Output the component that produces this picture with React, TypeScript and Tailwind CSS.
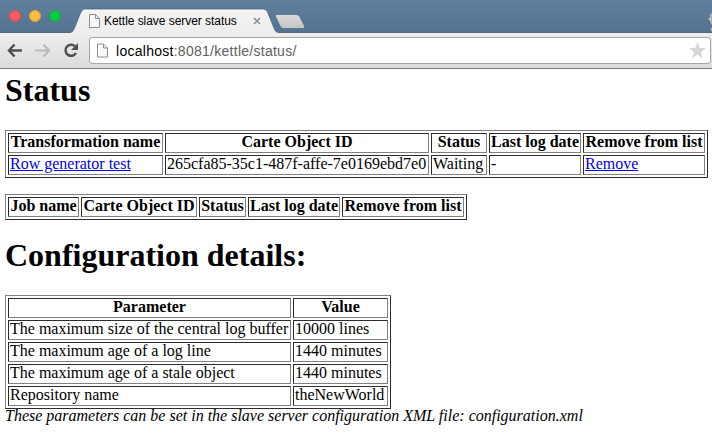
import type { ReactNode } from "react";

function PageIcon({ w, h }: { w: number; h: number }) {
  return (
    <svg width={w} height={h} viewBox="0 0 11 14" className="shrink-0">
      <path d="M.5.5h6l4 4v9H.5z" fill="#f8f8f8" stroke="#8e8e8e" />
      <path d="M6.5.5v4h4" fill="none" stroke="#8e8e8e" />
    </svg>
  );
}

function Th({ children }: { children: ReactNode }) {
  return (
    <th className="h-5 border border-t-[#2c2c2c] border-r-[#808080] border-b-[#808080] border-l-[#2c2c2c] p-0 text-center align-top leading-4 font-bold whitespace-nowrap">
      {children}
    </th>
  );
}

function Td({ children }: { children: ReactNode }) {
  return (
    <td className="h-5 border border-t-[#2c2c2c] border-r-[#808080] border-b-[#808080] border-l-[#2c2c2c] px-px py-0 text-left align-top leading-4 whitespace-nowrap">
      {children}
    </td>
  );
}

function Table({ width, cols, children }: { width: number; cols: number[]; children: ReactNode }) {
  return (
    <table
      className="table-fixed border-separate border-spacing-[2px] border border-t-[#808080] border-r-[#2c2c2c] border-b-[#2c2c2c] border-l-[#808080]"
      style={{ width }}
    >
      <colgroup>
        {cols.map((c, i) => (
          <col key={i} style={{ width: c }} />
        ))}
      </colgroup>
      <tbody>{children}</tbody>
    </table>
  );
}

function BrowserChrome() {
  return (
    <header className="h-[69px] font-['Liberation_Sans',Arial,sans-serif]">
      <div className="relative flex h-8 bg-linear-to-b from-[#617f9e] to-[#547391]">
        <div className="flex gap-2 pt-[10px] pl-[9px]">
          <span className="h-3 w-3 rounded-full border border-[#e0484a] bg-[#fc5b5e]" />
          <span className="h-3 w-3 rounded-full border border-[#dfa030] bg-[#fdbc40]" />
          <span className="h-3 w-3 rounded-full border border-[#10a93a] bg-[#08cc46]" />
        </div>
        <svg className="absolute top-0 left-0" width="712" height="33" viewBox="0 0 712 33">
          <defs>
            <linearGradient id="tab" x1="0" y1="0" x2="0" y2="1">
              <stop offset="0" stopColor="#f4f4f4" />
              <stop offset="1" stopColor="#ededed" />
            </linearGradient>
            <linearGradient id="newtab" x1="0" y1="0" x2="0" y2="1">
              <stop offset="0" stopColor="#dadada" />
              <stop offset="1" stopColor="#c4c4c4" />
            </linearGradient>
          </defs>
          <path d="M70 33C73 32 73.5 30 74.5 28L80.5 13Q82 9 85 9H263Q266 9 267.5 12L274 28C275 31 276 32 279 33Z" fill="url(#tab)" />
          <path
            d="M0 32.5H70C73 32 73.5 30 74.5 28L80.5 13Q82 9 85 9H263Q266 9 267.5 12L274 28C275 31 276 32.5 279 32.5H712"
            fill="none"
            stroke="#3f566d"
            strokeOpacity=".65"
          />
          <path d="M277 14.500H296Q299 14.500 300 17L304.500 26Q305.500 28.500 303 28.500H283.500Q281 28.500 280 26L275.500 16.500Q275 14.500 277 14.500Z" fill="url(#newtab)" stroke="#4b6680" strokeOpacity=".7" />
          <path d="M712 12.500L709.500 14l.5 3-2.500 2 2.500 2v3l2 1zM712 26l-2 3 1 3h1z" fill="#c9c9c9" stroke="#505a64" strokeWidth=".6" />
        </svg>
        <div className="absolute top-[14px] left-[89px] flex h-[14px] items-center">
          <PageIcon w={11} h={14} />
          <span className="ml-1 w-[149px] text-[12px] leading-[14px] tracking-[-0.05px] whitespace-nowrap text-black">Kettle slave server status</span>
          <svg width="8" height="8" viewBox="0 0 8 8" className="shrink-0">
            <path d="M1 1l6 6M7 1L1 7" stroke="#8b8b8b" strokeWidth="1.5" />
          </svg>
        </div>
      </div>
      <div className="flex h-[37px] border-t border-b border-t-[#8b8b8b] border-b-[#7b7b7b] bg-linear-to-b from-[#eeeeee] to-[#dcdcdc] pt-1">
        <div className="flex w-[89px] pt-[5px] pl-[7px]">
          <svg width="16" height="16" viewBox="0 0 16 16">
            <path d="M7.500 2.500L2 8.500l5.500 6M2 8.500h13" fill="none" stroke="#505050" strokeWidth="2.500" />
          </svg>
          <svg width="16" height="16" viewBox="0 0 16 16" className="ml-3">
            <path d="M8.500 2.500l5.500 6-5.500 6M14 8.500H0" fill="none" stroke="#b9b9b9" strokeWidth="2.200" />
          </svg>
          <svg width="16" height="16" viewBox="0 0 16 16" className="ml-3">
            <path d="M12 4.200A5.600 5.600 0 1 0 13 11" fill="none" stroke="#505050" strokeWidth="2.500" />
            <path d="M15 1v7H8z" fill="#505050" />
          </svg>
        </div>
        <div className="flex h-[27px] w-[622px] items-center rounded-[3px] border border-[#a5a5a5] bg-white pr-1 pl-[7px]">
          <PageIcon w={11} h={15} />
          <div className="ml-2 text-[14px] leading-[18px] tracking-[0.27px] whitespace-nowrap text-[#606060]">
            <span className="text-black">localhost</span>:8081/kettle/status/
          </div>
          <svg width="17" height="17" viewBox="0 0 17 17" className="ml-auto">
            <path d="M8.500 0l2.300 6H17l-5 4 1.900 6.500-5.400-3.900-5.400 3.900L5 10 0 6h6.200z" fill="#d6d6d6" />
          </svg>
        </div>
      </div>
    </header>
  );
}

export default function App() {
  return (
    <div className="h-[437px] w-[712px] overflow-hidden bg-white font-['Liberation_Serif','Times_New_Roman',serif] text-[16px] text-black">
      <BrowserChrome />
      <main className="pl-[5px]">
        <h1 className="h-[61px] pt-[3px] text-[32px] leading-[37px] font-bold">Status</h1>
        <Table width={703} cols={[155, 264, 56, 92, 122]}>
          <tr>
            <Th>Transformation name</Th>
            <Th>Carte Object ID</Th>
            <Th>Status</Th>
            <Th>Last log date</Th>
            <Th>Remove from list</Th>
          </tr>
          <tr>
            <Td><a href="#" className="text-[#0000ee] underline">Row generator test</a></Td>
            <Td>265cfa85-35c1-487f-affe-7e0169ebd7e0</Td>
            <Td>Waiting</Td>
            <Td>-</Td>
            <Td><a href="#" className="text-[#0000ee] underline">Remove</a></Td>
          </tr>
        </Table>
        <div className="mt-4">
          <Table width={462} cols={[71, 116, 47, 92, 122]}>
            <tr>
              <Th>Job name</Th>
              <Th>Carte Object ID</Th>
              <Th>Status</Th>
              <Th>Last log date</Th>
              <Th>Remove from list</Th>
            </tr>
          </Table>
        </div>
        <h1 className="h-[75px] pt-[17px] text-[32px] leading-[37px] font-bold">Configuration details:</h1>
        <Table width={386} cols={[283, 95]}>
          <tr>
            <Th>Parameter</Th>
            <Th>Value</Th>
          </tr>
          <tr>
            <Td>The maximum size of the central log buffer</Td>
            <Td>10000 lines</Td>
          </tr>
          <tr>
            <Td>The maximum age of a log line</Td>
            <Td>1440 minutes</Td>
          </tr>
          <tr>
            <Td>The maximum age of a stale object</Td>
            <Td>1440 minutes</Td>
          </tr>
          <tr>
            <Td>Repository name</Td>
            <Td>theNewWorld</Td>
          </tr>
        </Table>
        <p className="leading-[14px] whitespace-nowrap italic">
          These parameters can be set in the slave server configuration XML file: configuration.xml
        </p>
      </main>
    </div>
  );
}
